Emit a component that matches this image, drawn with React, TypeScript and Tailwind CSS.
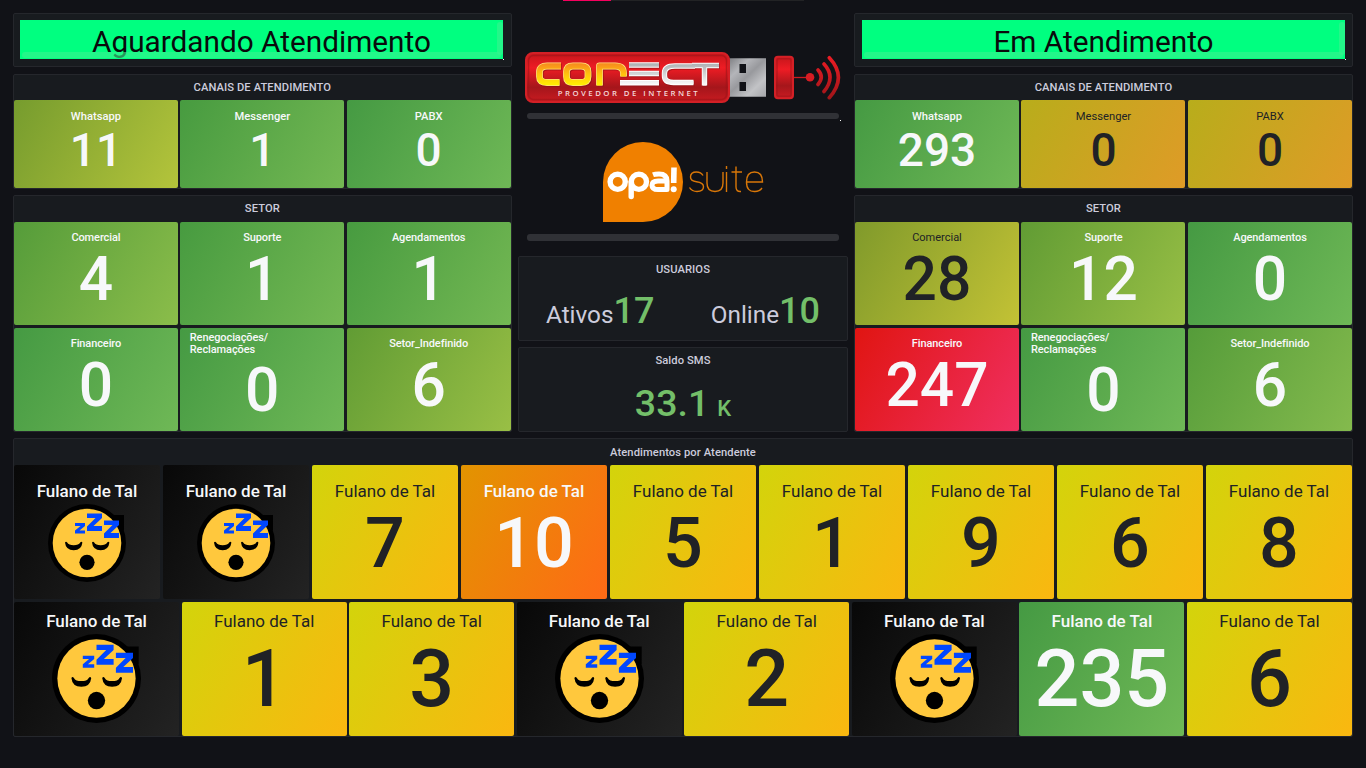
import React from "react";

type TileData = { label: string; value: string; bg: string; dark?: boolean; multiline?: boolean };

const G0 = "bg-[linear-gradient(120deg,#459a43,#6fb856)]";
const G1 = "bg-[linear-gradient(120deg,#479b40,#74b853)]";
const G4 = "bg-[linear-gradient(120deg,#559c3a,#8bbd4a)]";
const G6 = "bg-[linear-gradient(120deg,#619c34,#99bf45)]";
const G6B = "bg-[linear-gradient(120deg,#559c3a,#84ba4d)]";
const G11 = "bg-[linear-gradient(120deg,#769c2e,#b4c43b)]";
const G28 = "bg-[linear-gradient(120deg,#809a2b,#c3c235)]";
const GOLD = "bg-[linear-gradient(120deg,#b8ad1b,#df9b27)]";
const RED = "bg-[linear-gradient(120deg,#e01512,#f02f60)]";
const YELLOW = "bg-[linear-gradient(120deg,#d3d40b,#fab710)]";
const ORANGE = "bg-[linear-gradient(120deg,#e29400,#ff6a16)]";
const BLACK = "bg-[linear-gradient(120deg,#080808,#232323)]";

const waitingChannels: TileData[] = [
  { label: "Whatsapp", value: "11", bg: G11 },
  { label: "Messenger", value: "1", bg: G1 },
  { label: "PABX", value: "0", bg: G0 },
];
const activeChannels: TileData[] = [
  { label: "Whatsapp", value: "293", bg: G0 },
  { label: "Messenger", value: "0", bg: GOLD, dark: true },
  { label: "PABX", value: "0", bg: GOLD, dark: true },
];
const waitingSectors: TileData[] = [
  { label: "Comercial", value: "4", bg: G4 },
  { label: "Suporte", value: "1", bg: G1 },
  { label: "Agendamentos", value: "1", bg: G1 },
  { label: "Financeiro", value: "0", bg: G0 },
  { label: "Renegociações/ Reclamações", value: "0", bg: G0, multiline: true },
  { label: "Setor_Indefinido", value: "6", bg: G6 },
];
const activeSectors: TileData[] = [
  { label: "Comercial", value: "28", bg: G28, dark: true },
  { label: "Suporte", value: "12", bg: G6 },
  { label: "Agendamentos", value: "0", bg: G0 },
  { label: "Financeiro", value: "247", bg: RED },
  { label: "Renegociações/ Reclamações", value: "0", bg: G0, multiline: true },
  { label: "Setor_Indefinido", value: "6", bg: G6B },
];
const agentsTop = ["", "", "7", "10", "5", "1", "9", "6", "8"];
const agentsBottom = ["", "1", "3", "", "2", "", "235", "6"];

const panel = "box-border rounded-[2px] border border-[#25272c] bg-[#181b1f]";

function PanelTitle({ children, className = "" }: { children: React.ReactNode; className?: string }) {
  return (
    <div className={`flex justify-center text-[11.2px] leading-[26px] font-medium tracking-[0.08px] text-[#ccccdc] ${className}`}>
      {children}
    </div>
  );
}

function Banner({ children, inset = "pl-[6px]" }: { children: string; inset?: string }) {
  return (
    <section className={`h-[54px] pt-[6px] ${inset} ${panel}`}>
      <div className="relative h-[39px] w-[483px] overflow-hidden bg-[#00ff80] text-center text-[29.75px] leading-[43px] text-[#0a0a0c]">
        {children}
        <div className="absolute inset-x-[2px] bottom-px h-[6px] rounded-[3px] bg-[#3af28f]/60" />
        <div className="absolute top-[2px] right-0 h-[33px] w-[6px] rounded-[3px] bg-[#3af28f]/60" />
      </div>
      <div className="ml-[483px] size-px bg-white" />
    </section>
  );
}

function Channels({ tiles }: { tiles: TileData[] }) {
  return (
    <section className={`mt-[7px] h-[115px] ${panel}`}>
      <PanelTitle className="h-[25px]">CANAIS DE ATENDIMENTO</PanelTitle>
      <div className="grid h-[88px] grid-cols-3 gap-x-[2.5px]">
        {tiles.map((t) => (
          <div
            key={t.label}
            className={`flex flex-col items-center rounded-[2px] ${t.bg} ${t.dark ? "text-[#202226]" : "text-[#f7f8fa]"}`}
          >
            <span className={`mt-[10px] text-[11.2px] leading-[14px] ${t.dark ? "" : "font-medium"}`}>{t.label}</span>
            <span className="mt-[3px] text-[46px] leading-[46px] font-medium">{t.value}</span>
          </div>
        ))}
      </div>
    </section>
  );
}

function Sectors({ tiles }: { tiles: TileData[] }) {
  return (
    <section className={`mt-[6px] h-[237px] ${panel}`}>
      <PanelTitle className="h-[26px]">SETOR</PanelTitle>
      <div className="grid h-[209px] grid-cols-3 grid-rows-2 gap-x-[2.5px] gap-y-[3px]">
        {tiles.map((t) => (
          <div
            key={t.label}
            className={`flex flex-col items-center rounded-[2px] ${t.bg} ${t.dark ? "text-[#202226]" : "text-[#f7f8fa]"}`}
          >
            {t.multiline ? (
              <span className="mt-[4px] w-[145px] pr-[50px] text-[11px] leading-[12px] font-medium tracking-[-0.1px]">{t.label}</span>
            ) : (
              <span className={`mt-[9px] text-[11px] leading-[14px] ${t.dark ? "" : "font-medium tracking-[-0.1px]"}`}>{t.label}</span>
            )}
            <span className="mt-[5px] text-[60.5px] leading-[60px] font-medium">{t.value}</span>
          </div>
        ))}
      </div>
    </section>
  );
}

function Sleepy({ className }: { className: string }) {
  return (
    <svg viewBox="0 0 78 78" className={className}>
      <circle cx="39" cy="39" r="39" fill="#000" />
      <path d="M64 11h12v15l-6 3z" fill="#000" />
      <circle cx="39" cy="39" r="34.3" fill="#ffc83d" />
      <path
        d="M17 38.500q1-1.500 2.200 0 1.500 2.800 6.500 2.800t6.500-2.800q1.200-1.500 2.200 0-.8 7.700-8.700 7.700T17 38.500zM44 38.500q1-1.500 2.200 0 1.500 2.800 6.500 2.800t6.500-2.800q1.200-1.500 2.200 0-.8 7.700-8.700 7.700T44 38.500z"
        fill="#000"
      />
      <circle cx="39" cy="58.300" r="7.600" fill="#000" />
      <path
        d="M27 19h10v3l-5.500 4.500h5.500v3H27v-3l5.500-4.500H27zM39 9.500h15v4.500l-8.500 8h8.500v5H39v-4.500l8.500-8.500H39zM56 16.500h15v4.500l-8.500 8h8.500v5H56v-4.500l8.500-8.500H56z"
        fill="#0047ff"
      />
    </svg>
  );
}

function Agent({ value, row }: { value: string; row: 1 | 2 }) {
  const bg = value === "" ? BLACK : value === "10" ? ORANGE : value === "235" ? G0 : YELLOW;
  const light = value === "" || value === "10" || value === "235";
  return (
    <div className={`flex flex-col items-center overflow-hidden rounded-[2px] ${bg} ${light ? "font-medium text-[#f7f8fa]" : "text-[#202226]"}`}>
      <span className={`text-[17px] leading-[20px] ${row === 1 ? "mt-[16px]" : "mt-[9px]"}`}>Fulano de Tal</span>
      {value === "" ? (
        <Sleepy className={row === 1 ? "mt-[3px] size-[78px]" : "mt-[3px] size-[89px]"} />
      ) : (
        <span className={`font-medium ${row === 1 ? "mt-[7px] text-[70px] leading-[70px]" : "mt-[9px] text-[79px] leading-[79px]"}`}>
          {value}
        </span>
      )}
    </div>
  );
}

const goldLetters =
  "M41 18H27q-7.500 0-7.500 6v4.500q0 6 7.500 6h12.500M53 18h8q7 0 7 6v4.500q0 6-7 6h-8q-6.500 0-6.500-6V24q0-6 6.500-6zM79.500 37.500V18H95q8.500 0 8.500 7v3.500";
const silverLetters =
  "M109 17h30M109 25.500h30M100 34.800h39M175 18h-20q-10.500 0-10.500 7v3q0 6.500 9 6.500h20M172 17.500h27M184.500 18v19.500";

function ConectLogo() {
  return (
    <svg viewBox="0 0 322 60" className="h-[60px] w-[322px]">
      <defs>
        <linearGradient id="body" x2="0" y2="1">
          <stop stopColor="#c5161b" />
          <stop offset=".3" stopColor="#ee1c24" />
          <stop offset=".7" stopColor="#a5161b" />
          <stop offset="1" stopColor="#c91b21" />
        </linearGradient>
        <linearGradient id="gold" gradientUnits="userSpaceOnUse" x1="0" y1="14" x2="0" y2="38">
          <stop stopColor="#f58220" />
          <stop offset=".5" stopColor="#ffc20e" />
          <stop offset="1" stopColor="#fff200" />
        </linearGradient>
        <linearGradient id="silver" gradientUnits="userSpaceOnUse" x1="0" y1="14" x2="0" y2="38">
          <stop stopColor="#a9abae" />
          <stop offset="1" stopColor="#fff" />
        </linearGradient>
        <linearGradient id="metal" x2="1" y2="1">
          <stop stopColor="#77787c" />
          <stop offset=".3" stopColor="#b4b5b9" />
          <stop offset=".5" stopColor="#98999d" />
          <stop offset=".75" stopColor="#c2c3c6" />
          <stop offset="1" stopColor="#a5a6aa" />
        </linearGradient>
        <linearGradient id="wave" gradientUnits="userSpaceOnUse" x1="0" y1="8" x2="0" y2="52">
          <stop stopColor="#ed1c24" />
          <stop offset="1" stopColor="#9d1519" />
        </linearGradient>
      </defs>
      <path d="M206 10.300h40v38.400h-40z" fill="url(#metal)" />
      <path d="M219.500 16h6.500v9h-6.500zM219.500 34h6.500v9h-6.500z" fill="#111217" />
      <rect x="6" y="5" width="203" height="49" rx="7" fill="url(#body)" stroke="#d42026" strokeWidth="2" />
      <rect x="8.500" y="7.500" width="198" height="44" rx="5" fill="none" stroke="#9c1419" strokeOpacity=".6" strokeWidth="1.500" />
      <g fill="none" strokeLinejoin="round">
        <path d={goldLetters} stroke="#7c1013" strokeOpacity=".5" strokeWidth="7" transform="translate(.8 1)" />
        <path d={silverLetters} stroke="#7c1013" strokeOpacity=".5" strokeWidth="5.500" transform="translate(.8 1)" />
        <path d={goldLetters} stroke="#ffe680" strokeWidth="6.800" />
        <path d={goldLetters} stroke="url(#gold)" strokeWidth="5.400" />
        <path d={silverLetters} stroke="#fff" strokeWidth="5.400" />
        <path d={silverLetters} stroke="url(#silver)" strokeWidth="3.600" />
      </g>
      <text x="37.700" y="47.500" textLength="140" fill="#f4d9da" fontSize="7.800" fontFamily="Open Sans, sans-serif" fontWeight="600">
        PROVEDOR DE INTERNET
      </text>
      <rect x="255" y="8.700" width="18" height="41.600" rx="3" fill="url(#body)" stroke="#d42026" strokeWidth="2" />
      <rect x="257" y="10.700" width="14" height="37.600" rx="2" fill="none" stroke="#9c1419" strokeOpacity=".5" strokeWidth="1.500" />
      <path d="M274 29.500h13" stroke="#c91b21" strokeWidth="1.300" />
      <circle cx="290" cy="29.300" r="4.300" fill="#d71c23" />
      <g fill="none" stroke="url(#wave)" strokeWidth="3.600" strokeLinecap="round">
        <path d="M298 22q6.500 7 0 14.500M304 16q12 13 0 27.500M309.300 9.700q18.200 19.500 0 40" />
      </g>
    </svg>
  );
}

function OpaLogo() {
  return (
    <svg viewBox="0 0 164 82" className="h-[82px] w-[164px]">
      <path d="M1 81V41a40 40 0 1 1 40 40z" fill="#f08000" />
      <g fill="none" stroke="#fff" strokeWidth="5.400">
        <circle cx="15.700" cy="40.800" r="7.600" />
        <circle cx="36.900" cy="40.800" r="7.600" />
        <path d="M29.200 41v14.500" strokeLinecap="round" />
        <path d="M51 33.800q2-.8 6-.8 8 0 8 7v8.500h-9q-6 0-6-4.300t6-4.300h9" strokeLinejoin="round" strokeWidth="5" />
        <path d="M72 26.500l-.3 15.500" strokeWidth="5.600" />
      </g>
      <circle cx="71.700" cy="48.300" r="3" fill="#fff" />
      <g fill="none" stroke="#d97708" strokeWidth="1.400">
        <path d="M101 34.500q-2-3.500-6.500-3.500-6 0-6 5 0 4 6 4.800 7 .9 7 5 0 4.700-6.500 4.700-5 0-7.500-4M105 31v11q0 8.500 8 8.500t8-8.500V31M124.500 31v20M124.500 25v3M134 25.500V46q0 5 5 4.500M129.500 31h10.500M145 41h15.500q0-10-8-10T144.500 41t8.500 9.500q4.500 0 7-3.500" />
      </g>
    </svg>
  );
}

export default function App() {
  return (
    <main className="h-[768px] w-[1366px] overflow-hidden bg-[#111217] px-[13px] font-[Roboto,sans-serif]">
      <div className="flex h-[13px] items-start pl-[550px]">
        <div className="h-px w-[48px] bg-[#f5005e]" />
        <div className="h-px w-[193px] bg-[#222325]" />
      </div>
      <div className="flex h-[419px]">
        <div className="w-[498.6px]">
          <Banner>Aguardando Atendimento</Banner>
          <Channels tiles={waitingChannels} />
          <Sectors tiles={waitingSectors} />
        </div>
        <div className="ml-[6.400px] flex w-[330px] flex-col">
          <div className="mt-[35px] ml-[2px] h-[65px]"><ConectLogo /></div>
          <div className="ml-[9px] flex items-end">
            <div className="h-[6px] w-[312px] rounded-[3px] bg-[#303136]" />
            <div className="-mb-[2px] ml-px size-px bg-white" />
          </div>
          <div className="flex h-[115px] items-center justify-center pt-[11px] pl-[2px]"><OpaLogo /></div>
          <div className="ml-[9px] h-[7px] w-[312px] rounded-[3px] bg-[#303136]" />
          <section className={`mt-[15px] h-[85px] ${panel}`}>
            <PanelTitle className="h-[26px]">USUARIOS</PanelTitle>
            <div className="flex h-[56px] items-baseline justify-between pr-[27px] pl-[27px] leading-[56px]">
              <div className="text-[24.3px] text-[#ccccdc]">
                Ativos<span className="text-[36px] font-medium text-[#73bf69]">17</span>
              </div>
              <div className="text-[24.3px] text-[#ccccdc]">
                Online<span className="text-[36px] font-medium text-[#73bf69]">10</span>
              </div>
            </div>
          </section>
          <section className={`mt-[6px] h-[85px] ${panel}`}>
            <PanelTitle className="h-[26px]">Saldo SMS</PanelTitle>
            <div className="text-center text-[37.5px] leading-[59px] font-medium text-[#73bf69]">
              33.1<span className="ml-[8px] text-[22px]">K</span>
            </div>
          </section>
        </div>
        <div className="ml-[6px] w-[499px]">
          <Banner inset="pl-[7px]">Em Atendimento</Banner>
          <Channels tiles={activeChannels} />
          <Sectors tiles={activeSectors} />
        </div>
      </div>
      <section className={`mt-[6px] h-[299px] ${panel}`}>
        <PanelTitle className="h-[26px] pt-px">Atendimentos por Atendente</PanelTitle>
        <div className="grid h-[134px] grid-cols-9 gap-x-[3px]">
          {agentsTop.map((v, i) => <Agent key={i} value={v} row={1} />)}
        </div>
        <div className="mt-[3px] grid h-[134px] grid-cols-8 gap-x-[2.500px]">
          {agentsBottom.map((v, i) => <Agent key={i} value={v} row={2} />)}
        </div>
      </section>
    </main>
  );
}
